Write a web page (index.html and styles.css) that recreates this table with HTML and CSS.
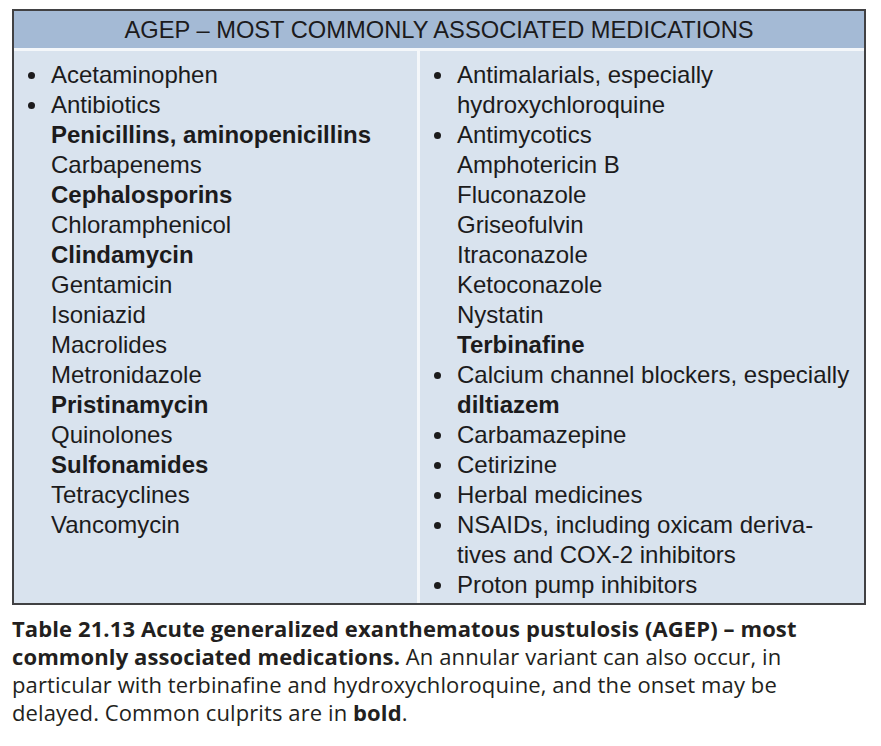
FILE: index.html
```html
<!DOCTYPE html>
<html lang="en">
<head>
<meta charset="utf-8">
<title>Table 21.13 AGEP</title>
<link rel="stylesheet" href="styles.css">
</head>
<body>
<figure class="figure">
  <div class="table">
    <div class="table-head">AGEP – MOST COMMONLY ASSOCIATED MEDICATIONS</div>
    <div class="table-body">
      <ul class="col col-left">
        <li class="b">Acetaminophen</li>
        <li class="b">Antibiotics</li>
        <li class="s strong">Penicillins, aminopenicillins</li>
        <li class="s">Carbapenems</li>
        <li class="s strong">Cephalosporins</li>
        <li class="s">Chloramphenicol</li>
        <li class="s strong">Clindamycin</li>
        <li class="s">Gentamicin</li>
        <li class="s">Isoniazid</li>
        <li class="s">Macrolides</li>
        <li class="s">Metronidazole</li>
        <li class="s strong">Pristinamycin</li>
        <li class="s">Quinolones</li>
        <li class="s strong">Sulfonamides</li>
        <li class="s">Tetracyclines</li>
        <li class="s">Vancomycin</li>
      </ul>
      <ul class="col col-right">
        <li class="b">Antimalarials, especially hydroxychloroquine</li>
        <li class="b">Antimycotics</li>
        <li class="s">Amphotericin B</li>
        <li class="s">Fluconazole</li>
        <li class="s">Griseofulvin</li>
        <li class="s">Itraconazole</li>
        <li class="s">Ketoconazole</li>
        <li class="s">Nystatin</li>
        <li class="s strong">Terbinafine</li>
        <li class="b">Calcium channel blockers, especially <strong>diltiazem</strong></li>
        <li class="b">Carbamazepine</li>
        <li class="b">Cetirizine</li>
        <li class="b">Herbal medicines</li>
        <li class="b">NSAIDs, including oxicam deriva&shy;tives and COX-2 inhibitors</li>
        <li class="b">Proton pump inhibitors</li>
      </ul>
    </div>
  </div>
  <figcaption class="caption"><strong>Table 21.13 Acute generalized exanthematous pustulosis (AGEP) – most commonly associated medications.</strong> An annular variant can also occur, in particular with terbinafine and hydroxychloroquine, and the onset may be delayed. Common culprits are in <strong>bold</strong>.</figcaption>
</figure>
</body>
</html>
```
FILE: styles.css
```css
html, body {
  margin: 0;
  padding: 0;
  background: #ffffff;
}

.figure {
  margin: 0;
  padding: 9px 0 0 12px;
  color: #1e1c1d;
}

.table {
  width: 850px;
  border: 2px solid #414143;
  background: #d9e3ee;
}

.table-head {
  height: 36px;
  padding-top: 1px;
  line-height: 36px;
  text-align: center;
  background: #a4bad5;
  border-bottom: 3px solid #f4f7fa;
  font-family: "Liberation Sans", Arial, sans-serif;
  font-size: 23.7px;
  color: #1c1b1c;
}

.table-body {
  display: grid;
  grid-template-columns: 406px 444px;
}

.col {
  list-style: none;
  margin: 0;
  padding: 9px 0 3px 37px;
  font-family: "Liberation Sans", Arial, sans-serif;
  font-size: 24px;
  line-height: 30px;
  color: #1c1b1c;
}

.col-left {
  border-right: 3px solid #f4f7fa;
}

.col-right {
  padding-right: 12px;
}

.col li {
  margin: 0;
}

.b::before {
  content: "";
  display: inline-block;
  width: 7px;
  height: 7px;
  border-radius: 50%;
  background: #1c1b1c;
  margin-left: -23.5px;
  margin-right: 16.5px;
  vertical-align: 4.5px;
}

.strong,
.col strong {
  font-weight: bold;
}

.caption {
  width: 805px;
  margin: 9px 0 0 0;
  font-family: "Open Sans", "Liberation Sans", sans-serif;
  font-size: 22px;
  line-height: 28px;
  letter-spacing: 0.1px;
  color: #231f20;
}

.caption strong {
  font-weight: 700;
}
```
